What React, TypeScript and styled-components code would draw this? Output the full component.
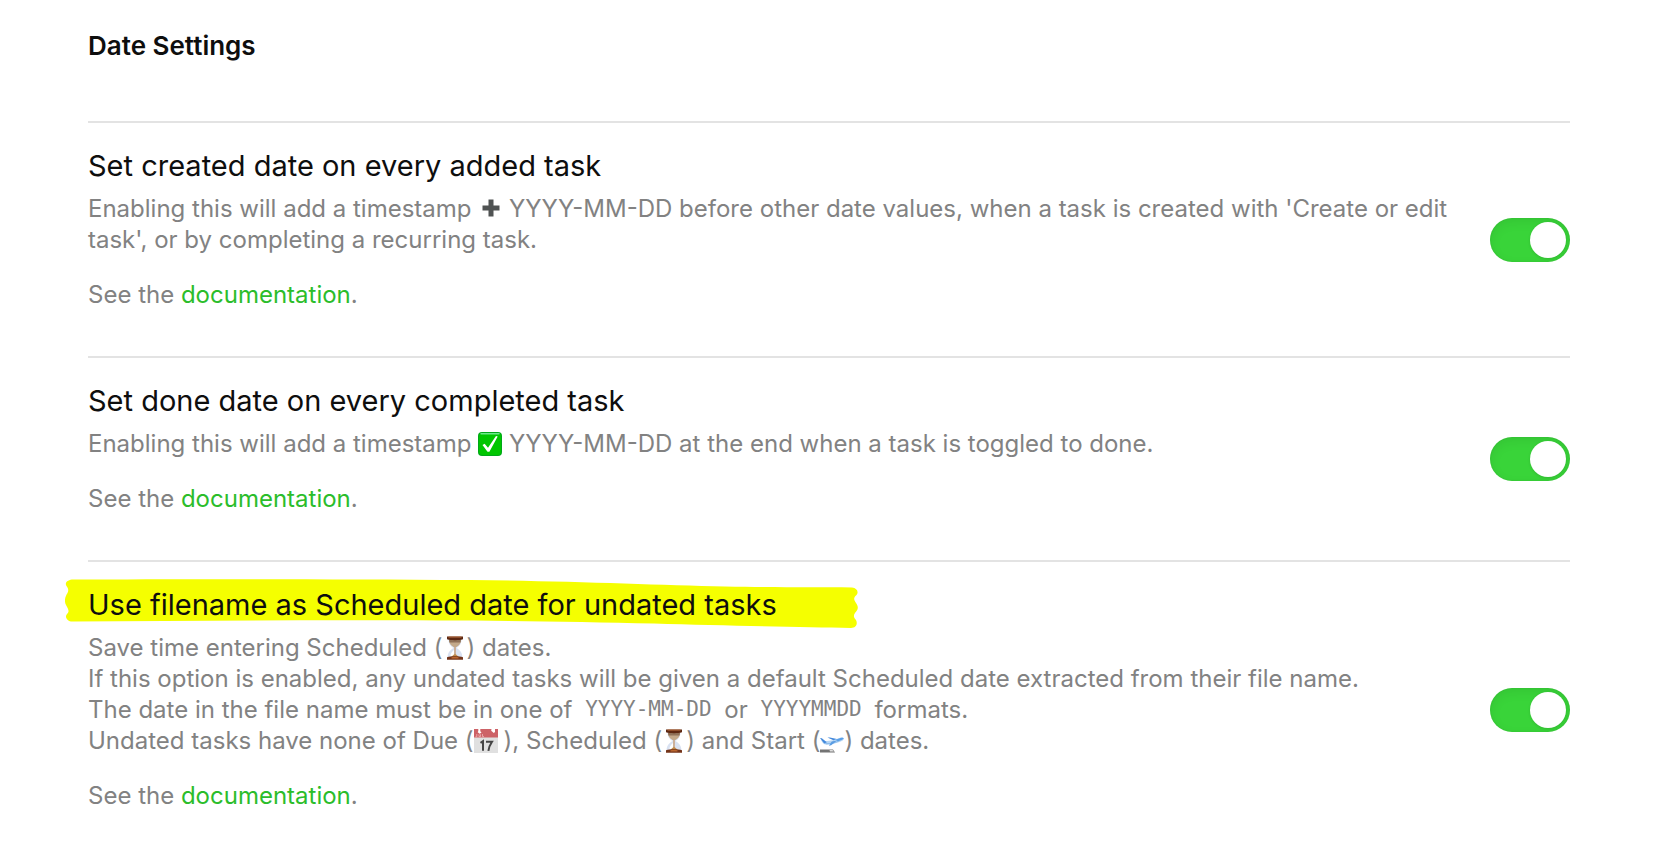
import React, { ReactNode, useId, useState } from 'react';
import styled, { createGlobalStyle } from 'styled-components';

const GlobalStyle = createGlobalStyle`
  body {
    margin: 0;
    background: #fff;
    color: #0e0e0e;
    font-family: Inter, 'Liberation Sans', sans-serif;
  }
`;

const Page = styled.main`
  padding: 26px 94px 0 88px;
`;

const SectionHeading = styled.h1`
  margin: 0 0 55px;
  font-size: 26px;
  line-height: 40px;
  font-weight: 600;
`;

const SettingItem = styled.section`
  display: flex;
  align-items: center;
  gap: 40px;
  border-top: 2px solid #e3e3e3;
  padding: 23px 0;
`;

const Info = styled.div`
  flex: 1;
  min-width: 0;
  padding-bottom: 23px;
`;

const SettingName = styled.h2`
  position: relative;
  isolation: isolate;
  margin: 0 0 8px;
  font-size: 29px;
  line-height: 39px;
  font-weight: 400;
`;

const Description = styled.div`
  color: #828282;
  font-size: 24px;
  line-height: 31px;
`;

const Paragraph = styled.p`
  margin: 0;

  & + & {
    margin-top: 24px;
  }
`;

const DocLink = styled.a`
  color: #2bbd2b;
  text-decoration: none;
`;

const Code = styled.code`
  padding: 0 6px;
  font-family: 'DejaVu Sans Mono', 'Liberation Mono', monospace;
  font-size: 21px;
  vertical-align: 2px;
`;

const Toggle = styled.input`
  appearance: none;
  flex: none;
  display: flex;
  width: 80px;
  height: 44px;
  margin: 0;
  padding: 4px;
  border-radius: 22px;
  background: #d4d4d4;
  box-shadow: inset 0 4px 12px rgba(0, 0, 0, 0.07), inset 0 0 2px rgba(0, 0, 0, 0.1);
  cursor: pointer;

  &::before {
    content: '';
    width: 36px;
    height: 36px;
    border-radius: 50%;
    background: #fff;
    box-shadow: 0 1px 3px rgba(0, 0, 0, 0.12);
  }

  &:checked {
    justify-content: flex-end;
    background: #39d439;
  }
`;

const Glyph = styled.svg<{ $gap?: number }>`
  width: 24px;
  height: 24px;
  margin: 0 ${({ $gap = 0 }) => $gap}px 0 0;
  vertical-align: -4px;
`;

const Marker = styled.svg`
  position: absolute;
  z-index: -1;
  left: -23px;
  top: -6px;
  width: 793px;
  height: 50px;
`;

const PlusIcon = () => (
  <Glyph viewBox="0 0 24 24" role="img" aria-label="plus">
    <path d="M10.500 2.500h5v6h6v5h-6v6h-5v-6h-6v-5h6z" fill="#505353" />
  </Glyph>
);

const CheckIcon = () => (
  <Glyph viewBox="0 0 24 24" role="img" aria-label="done">
    <rect width="24" height="24" rx="4" fill="#00a819" />
    <rect x="1" y="1" width="22" height="22" rx="3.5" fill="#00c600" />
    <path d="M3 1.800h18" stroke="#6be88a" strokeWidth="1.400" strokeLinecap="round" />
    <path d="M4.500 13l2.100-1.200 3.400 4L18 4l1.700.6-8.300 15.100H9.500z" fill="#fff" />
  </Glyph>
);

const HourglassIcon = () => (
  <Glyph viewBox="0 0 24 24" role="img" aria-label="hourglass">
    <path d="M5.500 3h13c0 5-2 7-5 9 3.500 2 6 5 6 9.500h-15c0-4.500 2.500-7.500 6-9.500-3-2-5-4-5-9z" fill="#d9e2f2" />
    <path d="M7.500 20c0-2.500 1.500-4.500 3.500-6v6z" fill="#fff" />
    <path d="M6 4h12c-.2 3.500-1.800 5.500-4.600 7h-2.800C7.800 9.500 6.200 7.500 6 4z" fill="#c3a98a" />
    <path d="M6 3.500h12l-.4 3H6.400z" fill="#8f7158" />
    <path d="M11.400 11h1.200v7h-1.200z" fill="#c49160" />
    <path d="M8 21.500c1-1.600 2.600-2.700 4-3.700 1.400 1 3 2.100 4 3.700z" fill="#c08a4c" />
    <path d="M4 .5h16v2.800c-4 1.200-12 1.200-16 0z" fill="#5d2812" />
    <path d="M5.500.5h13v1.100h-13z" fill="#b3683c" />
    <path d="M4 21.200c4-1.400 12-1.400 16 0v2.600H4z" fill="#74341a" />
    <path d="M8.500 21.300c2-.4 5-.4 7 0v1.300h-7z" fill="#bb662f" />
  </Glyph>
);

const CalendarIcon = () => (
  <Glyph viewBox="0 0 24 24" $gap={6} role="img" aria-label="calendar, July 17">
    <rect width="24" height="24" fill="#e0e0e0" />
    <rect width="24" height="8.500" fill="#cd6267" />
    <path d="M4.300 0h2v2.200l1.200 1.400-1.800 1.200-2-1.600.6-1.200zM17.500 0h3.500v3l-1.200 1-2.600-2.200z" fill="#fff" />
    <path d="M2.800 5v2.700H1.500M5 5.300v2.300h1.500V5.300M8.500 5v2.600H10" fill="none" stroke="#efb6b8" strokeWidth=".8" />
    <path d="M6.500 13.800l2.500-1.600v9.600M12 12.800h6c-2 3-3.200 5.600-3.600 9" fill="none" stroke="#444" strokeWidth="2" />
  </Glyph>
);

const DepartureIcon = () => (
  <Glyph viewBox="0 0 24 24" role="img" aria-label="departing airplane">
    <path
      d="M1 10.500l4 1.700 8-1 6.500-2.200c2.200-.7 4-.4 4.300.5.200 1.300-1.800 2.600-4.300 3.500-4.400 1.600-9 2.700-13 2.800C3.600 15.700 2 13.500 1 10.500z"
      fill="#b5d5f3"
    />
    <path d="M0 9l1.800.2 5 4-2.600 1.200z" fill="#4389dc" />
    <path d="M7.500 8.600l2.400-.2 7 1.600-3.500 1.300z" fill="#4389dc" />
    <path d="M4.300 14c5 .4 10.500-.8 15.200-2.600l-1 1.300c-4 1.500-8.700 2.600-11.900 2.500-1 0-1.700-.6-2.300-1.200z" fill="#8cbcec" />
    <path d="M17 11.500l-5.800 4.700-2.400.6 3-4.300z" fill="#5a9ce2" />
    <path d="M15.500 10.800l5-1.800c1.800-.5 3.200-.2 3.200.5-.4 1-3.500 2.200-6 2.800z" fill="#5ba0e8" />
    <path d="M0 20.500h13l2 3H0z" fill="#747474" />
    <path d="M9.500 21h3l1.500 1.400h-4z" fill="#ddd" />
  </Glyph>
);

const HighlighterStroke = () => (
  <Marker viewBox="0 0 793 50" aria-hidden="true">
    <path
      d="M8 0.500C120 0 260 0 405 1C500 2 590 6 660 7.500C710 8.500 750 8 787 8.500C792 9 794 13 791.500 16C788 19 789 21 791 24C794 28 793 31 790 34C788 37 789 39 791 41C793 45 791 49 786 49C740 48.500 660 46.500 589 44.500C520 43 440 41.500 375 41.500C260 41 130 41.500 8 42.500C3 43 -1 38 2 35C5 32 3 30 1 26C-1 22 0 18 2.500 14C4 11 3 9 1.500 7C-1 3 4 0.500 8 0.500Z"
      fill="#f5ff00"
    />
  </Marker>
);

interface SettingProps {
  name: string;
  highlighted?: boolean;
  children: ReactNode;
}

const Setting = ({ name, highlighted = false, children }: SettingProps) => {
  const [enabled, setEnabled] = useState(true);
  const id = useId();
  return (
    <SettingItem>
      <Info>
        <SettingName>
          {highlighted && <HighlighterStroke />}
          <label htmlFor={id}>{name}</label>
        </SettingName>
        <Description>
          <Paragraph>{children}</Paragraph>
          <Paragraph>
            See the <DocLink href="#documentation">documentation</DocLink>.
          </Paragraph>
        </Description>
      </Info>
      <Toggle id={id} type="checkbox" checked={enabled} onChange={(e) => setEnabled(e.target.checked)} />
    </SettingItem>
  );
};

export default function App() {
  return (
    <>
      <GlobalStyle />
      <Page>
        <SectionHeading>Date Settings</SectionHeading>
        <Setting name="Set created date on every added task">
          Enabling this will add a timestamp <PlusIcon /> YYYY-MM-DD before other date values, when a task is created
          with 'Create or edit task', or by completing a recurring task.
        </Setting>
        <Setting name="Set done date on every completed task">
          Enabling this will add a timestamp <CheckIcon /> YYYY-MM-DD at the end when a task is toggled to done.
        </Setting>
        <Setting name="Use filename as Scheduled date for undated tasks" highlighted>
          Save time entering Scheduled (<HourglassIcon />) dates.
          <br />
          If this option is enabled, any undated tasks will be given a default Scheduled date extracted from their file
          name.
          <br />
          The date in the file name must be in one of <Code>YYYY-MM-DD</Code> or <Code>YYYYMMDD</Code> formats.
          <br />
          Undated tasks have none of Due (<CalendarIcon />), Scheduled (<HourglassIcon />) and Start (
          <DepartureIcon />) dates.
        </Setting>
      </Page>
    </>
  );
}
